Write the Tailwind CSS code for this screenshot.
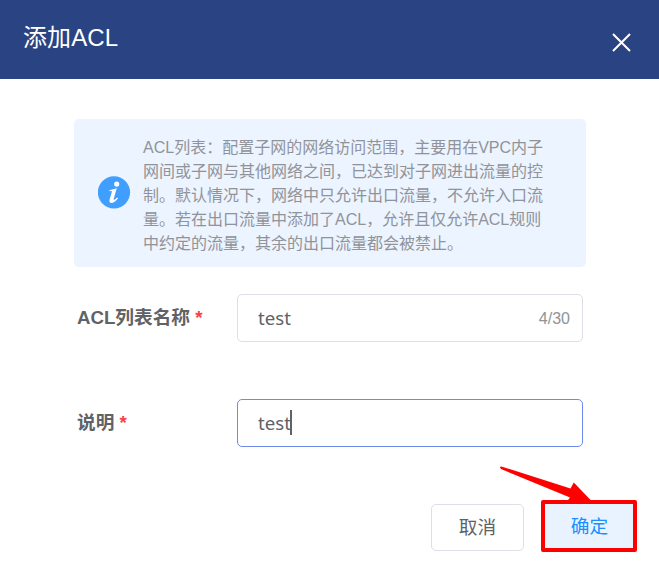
<!DOCTYPE html>
<html lang="zh-CN">
<head>
<meta charset="utf-8">
<title>添加ACL</title>
<script src="https://cdn.jsdelivr.net/npm/@tailwindcss/browser@4"></script>
</head>
<body class="bg-white font-['Liberation_Sans','Noto_Sans_CJK_SC',sans-serif] text-[#606266]">
<div class="relative flex h-[574px] w-[659px] flex-col overflow-hidden">
  <header class="flex h-[79px] shrink-0 justify-between bg-[#2a4483] pl-[23px] pr-[28px] text-white">
    <h1 class="pt-[20px] text-[24px] leading-[36px] tracking-[0.1px]">添加ACL</h1>
    <svg class="mt-[33px] h-[19px] w-[19px]" viewBox="0 0 19 19" fill="none" stroke="white" stroke-width="2"><path d="M1 1L18 18M18 1L1 18"/></svg>
  </header>
  <main class="flex flex-col pl-[74px] pr-[73px] pt-[40px]">
    <section class="flex h-[148px] items-center rounded-[5px] bg-[#ecf4ff] pl-[24px]">
      <svg class="mt-[-2px] h-[33px] w-[33px] shrink-0" viewBox="0 0 33 33"><circle cx="16" cy="16.3" r="16.1" fill="#409eff"/><circle cx="18.7" cy="8.1" r="2.6" fill="white"/><path d="M11.4 14.2L18.8 12.3L15.8 22.6C15.4 24.4 16.2 24.4 19.2 21.4L20 22.2C16.3 27.8 10.3 28.6 11.6 23.4L13.8 15.9C14 14.9 13.4 14.9 11.4 15.2Z" fill="white"/></svg>
      <p class="ml-[12px] whitespace-nowrap pt-[5px] text-[16px] leading-[24px] text-[#909399]">ACL列表：配置子网的网络访问范围，主要用在VPC内子<br>网间或子网与其他网络之间，已达到对子网进出流量的控<br>制。默认情况下，网络中只允许出口流量，不允许入口流<br>量。若在出口流量中添加了ACL，允许且仅允许ACL规则<br>中约定的流量，其余的出口流量都会被禁止。</p>
    </section>
    <form class="mt-[27px] flex flex-col gap-[57px] pl-[3px] pr-[3px]">
      <div class="flex h-[48px] items-center">
        <label class="w-[160px] shrink-0 whitespace-nowrap text-[18.67px] font-bold">ACL列表名称 <span class="text-[#f54343]">*</span></label>
        <div class="flex h-[48px] flex-1 items-center justify-between rounded-[5px] border border-[#dcdfe6] pl-[20px] pr-[12px]">
          <span class="font-['Noto_Sans',sans-serif] text-[18.67px]">test</span>
          <span class="pt-[2px] text-[16px] text-[#909399]">4/30</span>
        </div>
      </div>
      <div class="flex h-[48px] items-center">
        <label class="w-[160px] shrink-0 whitespace-nowrap text-[18.67px] font-bold">说明 <span class="text-[#f54343]">*</span></label>
        <div class="flex h-[48px] flex-1 items-center rounded-[5px] border border-[#708aec] pl-[20px]">
          <span class="font-['Noto_Sans',sans-serif] text-[18.67px]">test</span>
          <span class="-ml-px mb-[2px] h-[25px] w-[2px] bg-[#606266]"></span>
        </div>
      </div>
    </form>
  </main>
  <footer class="mt-[53px] flex items-start justify-end pr-[22px]">
    <button class="mt-[4px] h-[47px] w-[93px] rounded-[5px] border border-[#dcdfe6] text-[18.67px]">取消</button>
    <button class="ml-[17px] h-[52px] w-[96px] rounded-[2px] border-4 border-[#ff0000] bg-[#e8f3ff] pl-[1px] pt-[2px] text-[18.67px] text-[#1890ff]">确定</button>
  </footer>
  <svg class="absolute left-[495px] top-[462px] h-[44px] w-[100px]" viewBox="0 0 100 44"><path d="M5 5.5Q5 4 8 5L75.5 26.5L78.8 20.5L97 39.5H72L75 35.5L6 7Z" fill="#ff0000"/></svg>
</div>
</body>
</html>
